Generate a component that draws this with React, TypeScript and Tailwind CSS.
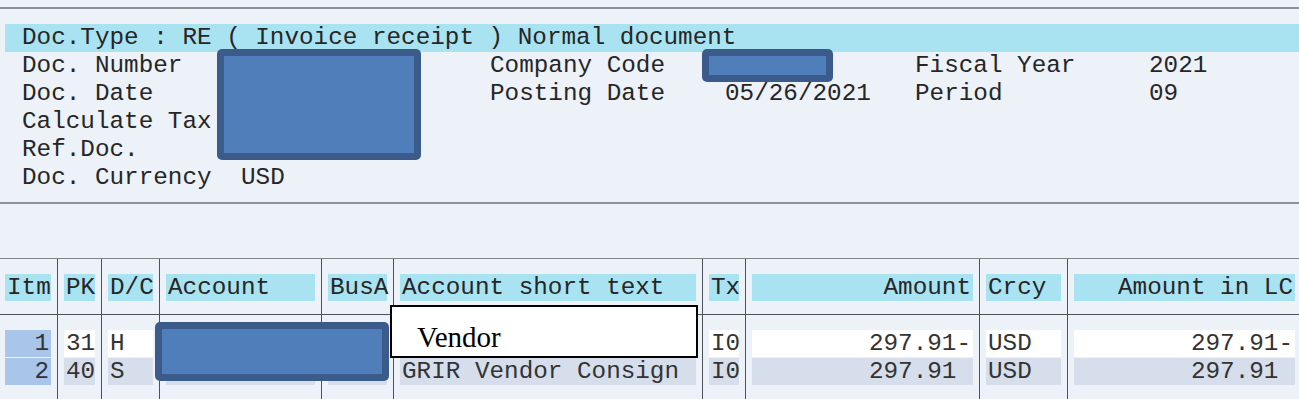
const mono = "font-['Liberation_Mono','Courier_New',monospace]";

// header fields, positioned on the SAP character grid
const headRows = [
  ["Doc. Number", "", "Company Code", "", "Fiscal Year", "2021"],
  ["Doc. Date", "", "Posting Date", "05/26/2021", "Period", "09"],
  ["Calculate Tax", "", "", "", "", ""],
  ["Ref.Doc.", "", "", "", "", ""],
  ["Doc. Currency", "USD", "", "", "", ""],
];

type Col = { title: string; right?: boolean; rows: [string, string]; itm?: boolean };

const cols: Col[] = [
  { title: "Itm", right: true, rows: ["1", "2"], itm: true },
  { title: "PK", rows: ["31", "40"] },
  { title: "D/C", rows: ["H", "S"] },
  { title: "Account", rows: ["", ""] },
  { title: "BusA", rows: ["", ""] },
  { title: "Account short text", rows: ["", "GRIR Vendor Consign"] },
  { title: "Tx", rows: ["I0", "I0"] },
  { title: "Amount", right: true, rows: ["297.91-", "297.91\u00a0"] },
  { title: "Crcy", rows: ["USD", "USD"] },
  { title: "Amount in LC", right: true, rows: ["297.91-", "297.91\u00a0"] },
];

const Redacted = ({ className }: { className: string }) => (
  <div className={`absolute rounded-[5px] bg-[#3b5c8a] p-[7px] ${className}`}>
    <div className="h-full w-full bg-[#4f7ebb]" />
  </div>
);

export default function App() {
  return (
    <div
      className={`relative h-[399px] w-[1299px] overflow-hidden bg-[#edf1f8] text-[24.3px] text-[#262626] ${mono}`}
    >
      <div className="h-[7px]" />
      <div className="h-[2px] bg-[#8d9199]" />
      <div className="h-[15px]" />

      {/* document type bar */}
      <div className="ml-[5px] h-[28px] bg-[#a9e3f2] pl-[17px] leading-[28px] whitespace-pre">
        Doc.Type : RE ( Invoice receipt ) Normal document
      </div>

      {/* header fields */}
      <div className="pl-[22px]">
        {headRows.map((r, i) => (
          <div
            key={i}
            className="grid h-[28px] grid-cols-[219px_249px_235px_190px_234px_1fr] leading-[28px] whitespace-pre"
          >
            {r.map((t, j) => (
              <div key={j}>{t}</div>
            ))}
          </div>
        ))}
      </div>

      <div className="h-[10px]" />
      <div className="h-[2px] bg-[#8d9199]" />
      <div className="h-[54px]" />

      {/* line items */}
      <div className="grid grid-cols-[57px_44px_58px_162px_72px_309px_43px_234px_88px_1fr] border-t border-[#80858c]">
        {cols.map((c, i) => (
          <div
            key={"h" + i}
            className={`border-b border-[#4d5259] pt-[15px] pb-[13px] ${
              i === 0 ? "pr-[6px] pl-[5px]" : "border-l px-[6px]"
            } ${i === 9 ? "pr-[4px]" : ""}`}
          >
            <div
              className={`h-[27px] bg-[#a9e3f2] px-[2px] leading-[27px] whitespace-pre ${
                c.right ? "text-right" : ""
              }`}
            >
              {c.title}
            </div>
          </div>
        ))}
        {cols.map((c, i) => (
          <div
            key={"d" + i}
            className={`flex h-[84px] flex-col gap-[1px] pt-[15px] ${
              i === 0 ? "pr-[6px] pl-[5px]" : "border-l border-[#4d5259] px-[6px]"
            } ${i === 9 ? "pr-[4px]" : ""}`}
          >
            {c.rows.map((v, k) => (
              <div
                key={k}
                className={`h-[27px] px-[2px] leading-[27px] whitespace-pre text-[#333] ${
                  c.right ? "text-right" : ""
                } ${c.itm ? "bg-[#a9c5ea]" : k === 0 ? "bg-white" : "bg-[#d6deec]"}`}
              >
                {v}
              </div>
            ))}
          </div>
        ))}
      </div>

      {/* masked fields */}
      <Redacted className="top-[49px] left-[217px] h-[111px] w-[204px]" />
      <Redacted className="top-[49px] left-[702px] h-[33px] w-[131px]" />
      <Redacted className="top-[322px] left-[155px] h-[59px] w-[234px]" />

      {/* pasted label over row 1 text */}
      <div className="absolute top-[305px] left-[390px] h-[53px] w-[308px] overflow-hidden border-2 border-black bg-white pt-[16px] pl-[25px] font-['Liberation_Serif',serif] text-[29px] leading-none text-black">
        Vendor
      </div>
    </div>
  );
}
